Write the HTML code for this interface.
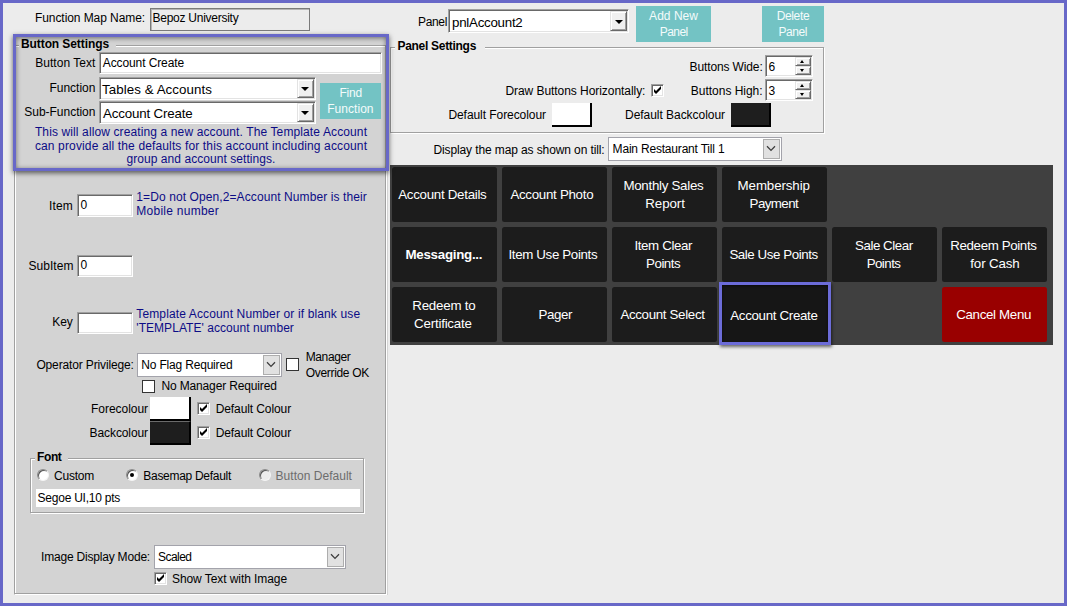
<!DOCTYPE html>
<html lang="en"><head><meta charset="utf-8"><title>Function Map Button Settings</title>
<style>
html,body{margin:0;padding:0;}
body{width:1067px;height:606px;overflow:hidden;background:#ececec;font-family:"Liberation Sans",sans-serif;position:relative;}
div{box-sizing:border-box;position:absolute;}
.t{white-space:nowrap;line-height:16px;height:16px;color:#000;}
.frame{left:0;top:0;width:1067px;height:606px;border:3px solid #6868c8;}
.sunk{background:#fff;border:1px solid;border-color:#a0a0a0 #fff #fff #a0a0a0;box-shadow:inset 1px 1px 0 #696969,inset -1px -1px 0 #e3e3e3;}
.raise{background:#f0f0f0;border:1px solid;border-color:#e3e3e3 #696969 #696969 #e3e3e3;box-shadow:inset 1px 1px 0 #fff,inset -1px -1px 0 #a0a0a0;}
.arr{width:0;height:0;border-left:4px solid transparent;border-right:4px solid transparent;border-top:4px solid #000;}
.flat{background:#fff;border:1px solid #a3a3ab;}
.flatbtn{background:#e1e1e1;border:1px solid #adadad;}
.chk{width:13px;height:13px;}
.fchk{width:13px;height:13px;background:#fff;border:1px solid #333;}
.teal{background:#73c3c4;}
.mb{background:#1c1c1c;border-radius:2.5px;width:105.6px;height:55.7px;}
.etch{border:1px solid #a0a0a0;box-shadow:1px 1px 0 #fff, inset 1px 1px 0 #fff;}
.radio{width:12px;height:12px;border-radius:50%;background:#fff;border:1px solid;border-color:#8a8a8a #f4f4f4 #f4f4f4 #8a8a8a;box-shadow:inset 1px 1px 0 #555;}
svg{position:absolute;overflow:visible;}
</style></head>
<body>
<div style="left:14px;top:37px;width:374px;height:558px;background:#d3d3d3;"></div>
<div class="etch" style="left:14px;top:45px;width:372px;height:549px;"></div>
<div style="left:19px;top:38px;width:97px;height:14px;background:#d3d3d3;"></div>
<div style="left:150px;top:8px;width:160px;height:23px;background:#ececec;border:1px solid #7a7a7a;box-shadow:inset 1px 1px 0 #b5b5b5;"></div>
<div class="sunk" style="left:99px;top:52.3px;width:282.6px;height:21.7px;"></div>
<div class="sunk" style="left:99px;top:77.4px;width:216.5px;height:22.8px;"></div>
<div class="raise" style="left:296.5px;top:79.4px;width:17px;height:18.8px;"></div>
<div class="arr" style="left:301.0px;top:87.30000000000001px;"></div>
<div class="sunk" style="left:99px;top:101.4px;width:216.5px;height:22.8px;"></div>
<div class="raise" style="left:296.5px;top:103.4px;width:17px;height:18.8px;"></div>
<div class="arr" style="left:301.0px;top:111.30000000000001px;"></div>
<div class="teal" style="left:320px;top:83px;width:61px;height:36px;"></div>
<div class="sunk" style="left:76.7px;top:194px;width:56px;height:22.8px;"></div>
<div class="sunk" style="left:76.7px;top:254.5px;width:56px;height:22.8px;"></div>
<div class="sunk" style="left:76.7px;top:311.5px;width:56px;height:22.8px;"></div>
<div class="flat" style="left:137px;top:353px;width:145px;height:24px;"></div>
<div class="flatbtn" style="left:263px;top:355px;width:17px;height:20px;"></div>
<svg style="left:266.3px;top:361.3px" width="10" height="7" viewBox="0 0 10 7"><path d="M1 1.2 L5 5.4 L9 1.2" fill="none" stroke="#3c3c3c" stroke-width="1.25"/></svg>
<div class="flat" style="left:154px;top:545px;width:192px;height:24px;"></div>
<div class="flatbtn" style="left:327px;top:547px;width:17px;height:20px;"></div>
<svg style="left:330.3px;top:553.3px" width="10" height="7" viewBox="0 0 10 7"><path d="M1 1.2 L5 5.4 L9 1.2" fill="none" stroke="#3c3c3c" stroke-width="1.25"/></svg>
<div class="flat" style="left:608px;top:137px;width:174px;height:24px;"></div>
<div class="flatbtn" style="left:763px;top:139px;width:17px;height:20px;"></div>
<svg style="left:766.3px;top:145.3px" width="10" height="7" viewBox="0 0 10 7"><path d="M1 1.2 L5 5.4 L9 1.2" fill="none" stroke="#3c3c3c" stroke-width="1.25"/></svg>
<div class="fchk" style="left:286px;top:358px;"></div>
<div class="fchk" style="left:142px;top:379.5px;"></div>
<div class="sunk chk" style="left:197px;top:402px;"></div>
<svg style="left:200px;top:405px" width="7" height="7" viewBox="0 0 7 7"><path d="M0 2 L2 4 L7 -1 L7 2 L2 7 L0 5 Z" fill="#000"/></svg>
<div class="sunk chk" style="left:197px;top:426px;"></div>
<svg style="left:200px;top:429px" width="7" height="7" viewBox="0 0 7 7"><path d="M0 2 L2 4 L7 -1 L7 2 L2 7 L0 5 Z" fill="#000"/></svg>
<div class="sunk chk" style="left:154px;top:571.6px;"></div>
<svg style="left:157px;top:574.6px" width="7" height="7" viewBox="0 0 7 7"><path d="M0 2 L2 4 L7 -1 L7 2 L2 7 L0 5 Z" fill="#000"/></svg>
<div class="sunk chk" style="left:651px;top:84px;"></div>
<svg style="left:654px;top:87px" width="7" height="7" viewBox="0 0 7 7"><path d="M0 2 L2 4 L7 -1 L7 2 L2 7 L0 5 Z" fill="#000"/></svg>
<div style="left:150px;top:397px;width:41px;height:23.7px;background:#fff;border-right:2px solid #000;border-bottom:2px solid #000;"></div>
<div style="left:150px;top:420.7px;width:41px;height:24px;background:#1e1e1e;border-right:2px solid #000;border-bottom:2px solid #000;border-top:1px solid #6a6a6a;"></div>
<div style="left:552px;top:103.4px;width:40px;height:23.4px;background:#fff;border-right:2px solid #000;border-bottom:2px solid #000;"></div>
<div style="left:731px;top:103.4px;width:40.3px;height:23.4px;background:#1e1e1e;border-right:2px solid #000;border-bottom:2px solid #000;"></div>
<div class="etch" style="left:30px;top:458px;width:334px;height:55px;"></div>
<div style="left:35px;top:451px;width:33px;height:12px;background:#d3d3d3;"></div>
<div style="left:36px;top:489px;width:324px;height:18px;background:#fff;"></div>
<div class="radio" style="left:36.8px;top:469.1px;"></div>
<div class="radio" style="left:126.3px;top:469.1px;"></div>
<div style="left:130.3px;top:473.1px;width:4px;height:4px;border-radius:50%;background:#000;"></div>
<div class="radio" style="left:258.8px;top:469.1px;background:#ececec;"></div>
<div class="sunk" style="left:448.4px;top:9.3px;width:181px;height:23.5px;"></div>
<div class="raise" style="left:610.4px;top:11.3px;width:17px;height:19.5px;"></div>
<div class="arr" style="left:614.9px;top:19.55px;"></div>
<div class="teal" style="left:636px;top:6px;width:75px;height:35.9px;"></div>
<div class="teal" style="left:762px;top:6px;width:62px;height:35.9px;"></div>
<div class="etch" style="left:389.6px;top:47px;width:434px;height:85.5px;"></div>
<div style="left:394.6px;top:40px;width:90px;height:12px;background:#ececec;"></div>
<div class="sunk" style="left:765px;top:55px;width:47.5px;height:21.7px;"></div>
<div class="raise" style="left:795.0px;top:57.0px;width:15.5px;height:8.85px;"></div>
<div class="raise" style="left:795.0px;top:65.85px;width:15.5px;height:8.85px;"></div>
<div class="arr" style="left:800.2px;top:59.925px;border-width:0 2.5px 3px 2.5px;border-style:solid;border-color:transparent transparent #000 transparent;"></div>
<div class="arr" style="left:800.2px;top:68.77499999999999px;border-width:3px 2.5px 0 2.5px;border-style:solid;border-color:#000 transparent transparent transparent;"></div>
<div class="sunk" style="left:765px;top:79.2px;width:47.5px;height:21.7px;"></div>
<div class="raise" style="left:795.0px;top:81.2px;width:15.5px;height:8.85px;"></div>
<div class="raise" style="left:795.0px;top:90.05px;width:15.5px;height:8.85px;"></div>
<div class="arr" style="left:800.2px;top:84.125px;border-width:0 2.5px 3px 2.5px;border-style:solid;border-color:transparent transparent #000 transparent;"></div>
<div class="arr" style="left:800.2px;top:92.975px;border-width:3px 2.5px 0 2.5px;border-style:solid;border-color:#000 transparent transparent transparent;"></div>
<div style="left:390px;top:165px;width:663px;height:180px;background:#404040;"></div>
<div class="mb" style="left:391.5px;top:166.5px;"></div>
<div class="mb" style="left:501.5px;top:166.5px;"></div>
<div class="mb" style="left:611.5px;top:166.5px;"></div>
<div class="mb" style="left:721.5px;top:166.5px;"></div>
<div class="mb" style="left:391.5px;top:226.5px;"></div>
<div class="mb" style="left:501.5px;top:226.5px;"></div>
<div class="mb" style="left:611.5px;top:226.5px;"></div>
<div class="mb" style="left:721.5px;top:226.5px;"></div>
<div class="mb" style="left:831.5px;top:226.5px;"></div>
<div class="mb" style="left:941.5px;top:226.5px;"></div>
<div class="mb" style="left:391.5px;top:286.5px;"></div>
<div class="mb" style="left:501.5px;top:286.5px;"></div>
<div class="mb" style="left:611.5px;top:286.5px;"></div>
<div class="mb" style="left:721.5px;top:286.5px;"></div>
<div class="mb" style="left:941.5px;top:286.5px;background:#990000;"></div>
<div style="left:719px;top:282px;width:112px;height:62.6px;background:#161616;border:3px solid #6c6cd8;box-shadow:1px 2px 3px rgba(0,0,0,0.55), inset 0 1px 3px rgba(0,0,0,0.6);"></div>
<div class="t" style="left:35.00px;top:10.30px;font-size:12px;letter-spacing:-0.077px;">Function Map Name:</div>
<div class="t" style="left:152.50px;top:10.30px;font-size:12px;letter-spacing:-0.259px;">Bepoz University</div>
<div class="t" style="left:21.00px;top:36.00px;font-size:12px;letter-spacing:-0.089px;font-weight:700;">Button Settings</div>
<div class="t" style="left:35.20px;top:54.80px;font-size:12px;letter-spacing:0.034px;">Button Text</div>
<div class="t" style="left:102.80px;top:55.00px;font-size:12px;letter-spacing:-0.108px;">Account Create</div>
<div class="t" style="left:49.40px;top:79.80px;font-size:12px;letter-spacing:-0.004px;">Function</div>
<div class="t" style="left:24.30px;top:103.70px;font-size:12px;letter-spacing:-0.023px;">Sub-Function</div>
<div class="t" style="left:102.00px;top:81.90px;font-size:13.33px;letter-spacing:0.063px;">Tables &amp; Accounts</div>
<div class="t" style="left:103.00px;top:105.90px;font-size:13.33px;letter-spacing:-0.170px;">Account Create</div>
<div class="t" style="left:49.00px;top:197.80px;font-size:12px;letter-spacing:0.114px;">Item</div>
<div class="t" style="left:28.40px;top:257.60px;font-size:12px;letter-spacing:0.057px;">SubItem</div>
<div class="t" style="left:52.20px;top:314.30px;font-size:12px;letter-spacing:-0.029px;">Key</div>
<div class="t" style="left:80.50px;top:196.80px;font-size:12px;letter-spacing:0.000px;">0</div>
<div class="t" style="left:80.50px;top:256.80px;font-size:12px;letter-spacing:0.000px;">0</div>
<div class="t" style="left:36.40px;top:356.70px;font-size:12px;letter-spacing:-0.139px;">Operator Privilege:</div>
<div class="t" style="left:141.30px;top:356.70px;font-size:12px;letter-spacing:-0.185px;">No Flag Required</div>
<div class="t" style="left:305.70px;top:349.00px;font-size:12px;letter-spacing:-0.368px;">Manager</div>
<div class="t" style="left:305.70px;top:364.60px;font-size:12px;letter-spacing:-0.308px;">Override OK</div>
<div class="t" style="left:161.40px;top:378.00px;font-size:12px;letter-spacing:-0.141px;">No Manager Required</div>
<div class="t" style="left:91.00px;top:400.90px;font-size:12px;letter-spacing:-0.036px;">Forecolour</div>
<div class="t" style="left:89.60px;top:424.70px;font-size:12px;letter-spacing:-0.097px;">Backcolour</div>
<div class="t" style="left:215.70px;top:400.90px;font-size:12px;letter-spacing:-0.094px;">Default Colour</div>
<div class="t" style="left:215.70px;top:424.70px;font-size:12px;letter-spacing:-0.094px;">Default Colour</div>
<div class="t" style="left:37.00px;top:448.70px;font-size:12px;letter-spacing:-0.375px;font-weight:700;">Font</div>
<div class="t" style="left:54.00px;top:468.00px;font-size:12px;letter-spacing:-0.224px;">Custom</div>
<div class="t" style="left:143.30px;top:468.00px;font-size:12px;letter-spacing:-0.291px;">Basemap Default</div>
<div class="t" style="left:275.60px;top:468.00px;font-size:12px;letter-spacing:0.024px;color:#6d6d6d;">Button Default</div>
<div class="t" style="left:37.60px;top:490.00px;font-size:12px;letter-spacing:-0.244px;">Segoe UI,10 pts</div>
<div class="t" style="left:41.00px;top:549.00px;font-size:12px;letter-spacing:-0.196px;">Image Display Mode:</div>
<div class="t" style="left:158.00px;top:549.00px;font-size:12px;letter-spacing:-0.534px;">Scaled</div>
<div class="t" style="left:172.00px;top:570.70px;font-size:12px;letter-spacing:-0.076px;">Show Text with Image</div>
<div class="t" style="left:418.00px;top:14.00px;font-size:12px;letter-spacing:-0.341px;">Panel</div>
<div class="t" style="left:452.00px;top:15.00px;font-size:13.33px;letter-spacing:-0.260px;">pnlAccount2</div>
<div class="t" style="left:397.50px;top:38.00px;font-size:12px;letter-spacing:-0.299px;font-weight:700;">Panel Settings</div>
<div class="t" style="left:689.60px;top:59.00px;font-size:12px;letter-spacing:-0.131px;">Buttons Wide:</div>
<div class="t" style="left:690.80px;top:82.80px;font-size:12px;letter-spacing:-0.019px;">Buttons High:</div>
<div class="t" style="left:768.60px;top:58.50px;font-size:12px;letter-spacing:0.000px;">6</div>
<div class="t" style="left:768.60px;top:82.50px;font-size:12px;letter-spacing:0.000px;">3</div>
<div class="t" style="left:505.40px;top:82.80px;font-size:12px;letter-spacing:-0.053px;">Draw Buttons Horizontally:</div>
<div class="t" style="left:448.40px;top:107.00px;font-size:12px;letter-spacing:-0.062px;">Default Forecolour</div>
<div class="t" style="left:625.00px;top:107.00px;font-size:12px;letter-spacing:-0.040px;">Default Backcolour</div>
<div class="t" style="left:433.40px;top:142.20px;font-size:12px;letter-spacing:-0.108px;">Display the map as shown on till:</div>
<div class="t" style="left:612.60px;top:140.80px;font-size:12px;letter-spacing:-0.194px;">Main Restaurant Till 1</div>
<div class="t" style="left:398.20px;top:186.50px;font-size:13.33px;letter-spacing:-0.287px;color:#fff;">Account Details</div>
<div class="t" style="left:510.40px;top:186.50px;font-size:13.33px;letter-spacing:-0.293px;color:#fff;">Account Photo</div>
<div class="t" style="left:623.40px;top:178.10px;font-size:13.33px;letter-spacing:-0.286px;color:#fff;">Monthly Sales</div>
<div class="t" style="left:645.30px;top:195.50px;font-size:13.33px;letter-spacing:-0.086px;color:#fff;">Report</div>
<div class="t" style="left:737.60px;top:178.10px;font-size:13.33px;letter-spacing:-0.114px;color:#fff;">Membership</div>
<div class="t" style="left:749.60px;top:195.50px;font-size:13.33px;letter-spacing:-0.573px;color:#fff;">Payment</div>
<div class="t" style="left:405.50px;top:246.50px;font-size:13.33px;letter-spacing:-0.275px;font-weight:700;color:#fff;">Messaging...</div>
<div class="t" style="left:508.50px;top:246.50px;font-size:13.33px;letter-spacing:-0.359px;color:#fff;">Item Use Points</div>
<div class="t" style="left:634.40px;top:237.50px;font-size:13.33px;letter-spacing:-0.368px;color:#fff;">Item Clear</div>
<div class="t" style="left:646.10px;top:255.50px;font-size:13.33px;letter-spacing:-0.508px;color:#fff;">Points</div>
<div class="t" style="left:729.40px;top:246.50px;font-size:13.33px;letter-spacing:-0.435px;color:#fff;">Sale Use Points</div>
<div class="t" style="left:855.10px;top:237.50px;font-size:13.33px;letter-spacing:-0.473px;color:#fff;">Sale Clear</div>
<div class="t" style="left:866.70px;top:255.50px;font-size:13.33px;letter-spacing:-0.558px;color:#fff;">Points</div>
<div class="t" style="left:950.30px;top:237.50px;font-size:13.33px;letter-spacing:-0.379px;color:#fff;">Redeem Points</div>
<div class="t" style="left:970.30px;top:255.50px;font-size:13.33px;letter-spacing:-0.134px;color:#fff;">for Cash</div>
<div class="t" style="left:412.30px;top:297.60px;font-size:13.33px;letter-spacing:-0.234px;color:#fff;">Redeem to</div>
<div class="t" style="left:414.10px;top:315.50px;font-size:13.33px;letter-spacing:-0.218px;color:#fff;">Certificate</div>
<div class="t" style="left:538.50px;top:306.50px;font-size:13.33px;letter-spacing:-0.436px;color:#fff;">Pager</div>
<div class="t" style="left:620.40px;top:306.50px;font-size:13.33px;letter-spacing:-0.336px;color:#fff;">Account Select</div>
<div class="t" style="left:730.30px;top:307.60px;font-size:13.33px;letter-spacing:-0.327px;color:#fff;">Account Create</div>
<div class="t" style="left:956.20px;top:306.50px;font-size:13.33px;letter-spacing:-0.330px;color:#fff;">Cancel Menu</div>
<div class="t" style="left:34.90px;top:123.70px;font-size:12px;letter-spacing:0.119px;color:#0c0c86;">This will allow creating a new account. The Template Account</div>
<div class="t" style="left:34.90px;top:137.60px;font-size:12px;letter-spacing:0.138px;color:#0c0c86;">can provide all the defaults for this account including account</div>
<div class="t" style="left:126.40px;top:150.60px;font-size:12px;letter-spacing:0.062px;color:#0c0c86;">group and account settings.</div>
<div class="t" style="left:136.30px;top:189.00px;font-size:12px;letter-spacing:0.098px;color:#0c0c86;">1=Do not Open,2=Account Number is their</div>
<div class="t" style="left:136.30px;top:202.80px;font-size:12px;letter-spacing:0.256px;color:#0c0c86;">Mobile number</div>
<div class="t" style="left:136.30px;top:305.90px;font-size:12px;letter-spacing:0.131px;color:#0c0c86;">Template Account Number or if blank use</div>
<div class="t" style="left:136.30px;top:319.50px;font-size:12px;letter-spacing:0.047px;color:#0c0c86;">'TEMPLATE' account number</div>
<div class="t" style="left:339.40px;top:85.00px;font-size:12px;letter-spacing:-0.211px;color:#f4fbfb;">Find</div>
<div class="t" style="left:327.20px;top:100.80px;font-size:12px;letter-spacing:0.046px;color:#f4fbfb;">Function</div>
<div class="t" style="left:649.10px;top:7.60px;font-size:12px;letter-spacing:0.028px;color:#f4fbfb;">Add New</div>
<div class="t" style="left:659.80px;top:23.60px;font-size:12px;letter-spacing:-0.561px;color:#f4fbfb;">Panel</div>
<div class="t" style="left:776.70px;top:7.60px;font-size:12px;letter-spacing:-0.365px;color:#f4fbfb;">Delete</div>
<div class="t" style="left:778.60px;top:23.60px;font-size:12px;letter-spacing:-0.481px;color:#f4fbfb;">Panel</div>
<div style="left:13px;top:34px;width:376px;height:137px;border:3px solid #6868c8;box-shadow:0 2px 5px rgba(0,0,0,0.6), inset 0 1px 5px rgba(0,0,0,0.5);"></div>
<div class="frame"></div>
</body></html>
